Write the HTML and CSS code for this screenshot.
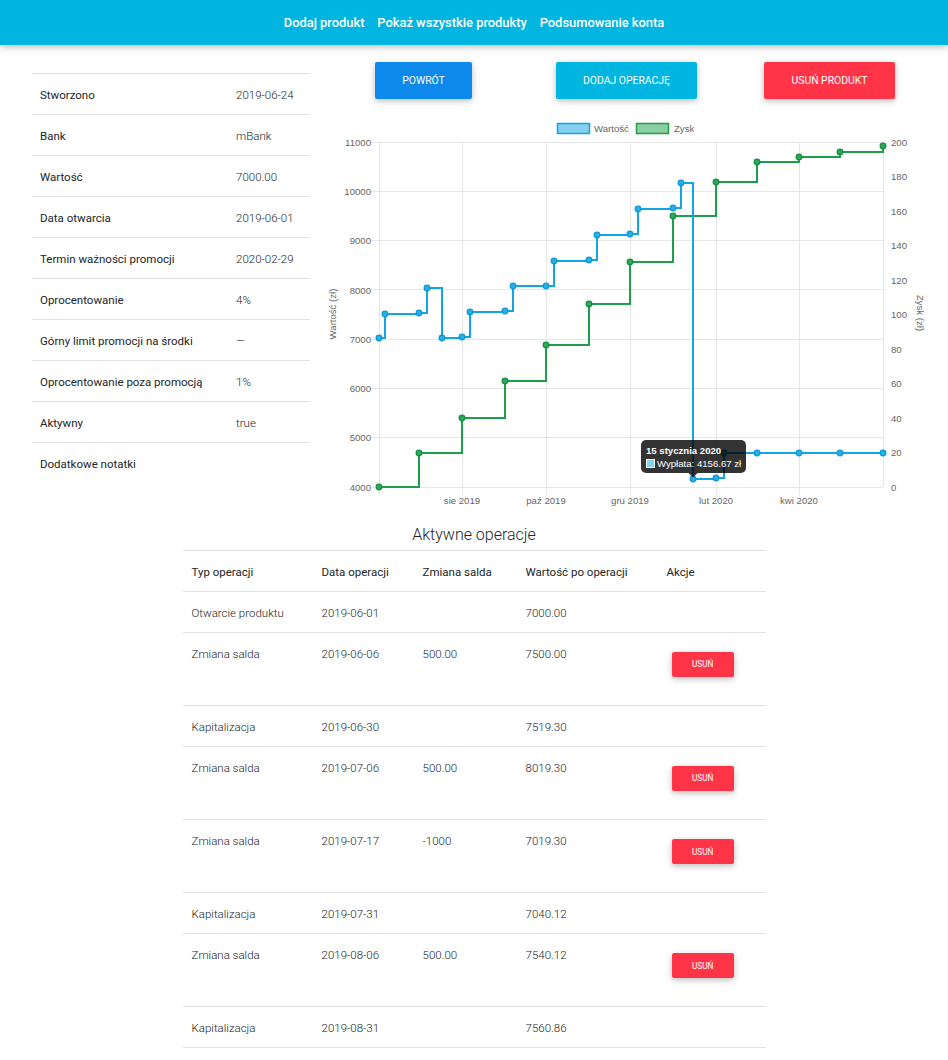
FILE: index.html
```html
<!DOCTYPE html>
<html lang="pl">
<head>
<meta charset="utf-8">
<title>Produkt</title>
<link rel="stylesheet" href="styles.css">
</head>
<body>
<nav class="navbar">
  <a class="nav-link" href="#">Dodaj produkt</a>
  <a class="nav-link" href="#">Pokaż wszystkie produkty</a>
  <a class="nav-link" href="#">Podsumowanie konta</a>
</nav>

<main class="content">
  <section class="details">
    <div class="detail-row"><span class="label">Stworzono</span><span class="value">2019-06-24</span></div>
    <div class="detail-row"><span class="label">Bank</span><span class="value">mBank</span></div>
    <div class="detail-row"><span class="label">Wartość</span><span class="value">7000.00</span></div>
    <div class="detail-row"><span class="label">Data otwarcia</span><span class="value">2019-06-01</span></div>
    <div class="detail-row"><span class="label">Termin ważności promocji</span><span class="value">2020-02-29</span></div>
    <div class="detail-row"><span class="label">Oprocentowanie</span><span class="value">4%</span></div>
    <div class="detail-row"><span class="label">Górny limit promocji na środki</span><span class="value">—</span></div>
    <div class="detail-row"><span class="label">Oprocentowanie poza promocją</span><span class="value">1%</span></div>
    <div class="detail-row"><span class="label">Aktywny</span><span class="value">true</span></div>
    <div class="detail-row"><span class="label">Dodatkowe notatki</span><span class="value"></span></div>
  </section>

  <section class="chart-col">
    <div class="actions">
      <button class="btn btn-primary">Powrót</button>
      <button class="btn btn-info">Dodaj operację</button>
      <button class="btn btn-danger">Usuń produkt</button>
    </div>
    <svg class="chart" viewBox="320 110 611 402" width="611" height="402">
      <g stroke="#e6e6e6" stroke-width="1" fill="none">
        <path d="M371 142.5H883M371 191.5H883M371 240.5H883M371 289.5H883M371 339.5H883M371 388.5H883M371 437.5H883M371 487.5H883"/>
        <path d="M379.5 142V495M462.5 142V495M546.5 142V495M630.5 142V495M716.5 142V495M799.5 142V495M883.5 142V487"/>
      </g>
      <g class="tick" text-anchor="end">
        <text x="371" y="146">11000</text>
        <text x="371" y="195">10000</text>
        <text x="371" y="244">9000</text>
        <text x="371" y="294">8000</text>
        <text x="371" y="343">7000</text>
        <text x="371" y="392">6000</text>
        <text x="371" y="441">5000</text>
        <text x="371" y="491">4000</text>
      </g>
      <g class="tick" text-anchor="start">
        <text x="891" y="146">200</text>
        <text x="891" y="180">180</text>
        <text x="891" y="215">160</text>
        <text x="891" y="249">140</text>
        <text x="891" y="284">120</text>
        <text x="891" y="318">100</text>
        <text x="891" y="353">80</text>
        <text x="891" y="387">60</text>
        <text x="891" y="422">40</text>
        <text x="891" y="456">20</text>
        <text x="891" y="491">0</text>
      </g>
      <g class="tick" text-anchor="middle">
        <text x="462" y="504">sie 2019</text>
        <text x="546" y="504">paź 2019</text>
        <text x="630" y="504">gru 2019</text>
        <text x="716" y="504">lut 2020</text>
        <text x="799" y="504">kwi 2020</text>
      </g>
      <text class="tick" text-anchor="middle" transform="translate(335.5 314) rotate(-90)">Wartość (zł)</text>
      <text class="tick" text-anchor="middle" transform="translate(917 313) rotate(90)">Zysk (zł)</text>

      <g class="legend">
        <rect x="557.5" y="123.5" width="32" height="10" fill="#86d0f0" stroke="#12a4e3" stroke-width="1.5"/>
        <text class="tick" x="594" y="132">Wartość</text>
        <rect x="636.5" y="123.5" width="32" height="10" fill="#8bcea0" stroke="#1c9e4b" stroke-width="1.5"/>
        <text class="tick" x="674" y="132">Zysk</text>
      </g>

      <path class="line-green" d="M379 487H419V453H462V418H505V381H546V345H589V304H630V262H673V216H716V182H757V162H799V157H840V152H883V146"/>
      <g class="pts-green">
        <circle cx="379" cy="487" r="2.8"/><circle cx="419" cy="453" r="2.8"/><circle cx="462" cy="418" r="2.8"/>
        <circle cx="505" cy="381" r="2.8"/><circle cx="546" cy="345" r="2.8"/><circle cx="589" cy="304" r="2.8"/>
        <circle cx="630" cy="262" r="2.8"/><circle cx="673" cy="216" r="2.8"/><circle cx="716" cy="182" r="2.8"/>
        <circle cx="757" cy="162" r="2.8"/><circle cx="799" cy="157" r="2.8"/><circle cx="840" cy="152" r="2.8"/>
        <circle cx="883" cy="146" r="2.8"/>
      </g>

      <path class="line-blue" d="M379 338H385V314H419V313H427V288H442V338H462V337H470V312H505V311H513V286H546V286H554V261H589V260H597V235H630V234H638V209H673V208H681V183H693V479H716V478H724V453H883"/>
      <g class="pts-blue">
        <circle cx="379" cy="338" r="2.8"/><circle cx="385" cy="314" r="2.8"/><circle cx="419" cy="313" r="2.8"/>
        <circle cx="427" cy="288" r="2.8"/><circle cx="442" cy="338" r="2.8"/><circle cx="462" cy="337" r="2.8"/>
        <circle cx="470" cy="312" r="2.8"/><circle cx="505" cy="311" r="2.8"/><circle cx="513" cy="286" r="2.8"/>
        <circle cx="546" cy="286" r="2.8"/><circle cx="554" cy="261" r="2.8"/><circle cx="589" cy="260" r="2.8"/>
        <circle cx="597" cy="235" r="2.8"/><circle cx="630" cy="234" r="2.8"/><circle cx="638" cy="209" r="2.8"/>
        <circle cx="673" cy="208" r="2.8"/><circle cx="681" cy="183" r="2.8"/><circle cx="693" cy="479" r="2.8"/>
        <circle cx="716" cy="478" r="2.8"/><circle cx="724" cy="453" r="2.8"/><circle cx="757" cy="453" r="2.8"/>
        <circle cx="799" cy="453" r="2.8"/><circle cx="840" cy="453" r="2.8"/><circle cx="883" cy="453" r="2.8"/>
      </g>

      <g class="tooltip">
        <rect x="641" y="440" width="105" height="33" rx="5" fill="rgba(0,0,0,0.8)"/>
        <path d="M688.5 473L693 477.5L697.5 473Z" fill="rgba(0,0,0,0.8)"/>
        <text class="tt-title" x="646" y="454">15 stycznia 2020</text>
        <rect x="646" y="459" width="9" height="9" fill="#ffffff"/>
        <rect x="647" y="460" width="7" height="7" fill="#86d0f0"/>
        <text class="tt-body" x="657" y="467">Wypłata: 4156.67 zł</text>
      </g>
    </svg>
  </section>
</main>

<section class="operations">
  <h2 class="ops-title">Aktywne operacje</h2>
  <table class="ops-table">
    <colgroup>
      <col class="c1"><col class="c2"><col class="c3"><col class="c4"><col class="c5">
    </colgroup>
    <thead>
      <tr><th>Typ operacji</th><th>Data operacji</th><th>Zmiana salda</th><th>Wartość po operacji</th><th>Akcje</th></tr>
    </thead>
    <tbody>
      <tr><td>Otwarcie produktu</td><td>2019-06-01</td><td></td><td>7000.00</td><td></td></tr>
      <tr><td>Zmiana salda</td><td>2019-06-06</td><td>500.00</td><td>7500.00</td><td><button class="btn btn-danger btn-sm">Usuń</button></td></tr>
      <tr><td>Kapitalizacja</td><td>2019-06-30</td><td></td><td>7519.30</td><td></td></tr>
      <tr><td>Zmiana salda</td><td>2019-07-06</td><td>500.00</td><td>8019.30</td><td><button class="btn btn-danger btn-sm">Usuń</button></td></tr>
      <tr><td>Zmiana salda</td><td>2019-07-17</td><td>-1000</td><td>7019.30</td><td><button class="btn btn-danger btn-sm">Usuń</button></td></tr>
      <tr><td>Kapitalizacja</td><td>2019-07-31</td><td></td><td>7040.12</td><td></td></tr>
      <tr><td>Zmiana salda</td><td>2019-08-06</td><td>500.00</td><td>7540.12</td><td><button class="btn btn-danger btn-sm">Usuń</button></td></tr>
      <tr><td>Kapitalizacja</td><td>2019-08-31</td><td></td><td>7560.86</td><td></td></tr>
    </tbody>
  </table>
</section>
</body>
</html>
```

FILE: styles.css
```css
* { box-sizing: border-box; }

body {
  margin: 0;
  font-family: Roboto, "Noto Sans", Arial, sans-serif;
  color: #212529;
  background: #ffffff;
}

.navbar {
  height: 45px;
  background: #00b5e0;
  display: flex;
  justify-content: center;
  align-items: center;
  box-shadow: 0 2px 5px 0 rgba(0,0,0,.16), 0 2px 10px 0 rgba(0,0,0,.12);
}

.nav-link {
  color: #ffffff;
  font-size: 12.9px;
  font-weight: 500;
  padding: 0 6.4px;
  text-decoration: none;
}

.content {
  display: flex;
  gap: 10px;
  padding: 0 17px 0 32px;
}

.details {
  width: 278px;
  flex: none;
  margin-top: 28px;
}

.detail-row {
  display: grid;
  grid-template-columns: 196px 1fr;
  border-top: 1px solid #dee2e6;
  font-size: 11.5px;
  line-height: 17px;
}

.detail-row > span {
  padding: 13px 8px 10px;
}

.label { font-weight: 400; }
.value { font-weight: 300; }

.chart-col {
  flex: 1;
  min-width: 0;
}

.actions {
  display: grid;
  grid-template-columns: repeat(3, 1fr);
  justify-items: center;
  margin-top: 17px;
  padding-left: 2px;
}

.btn {
  font-family: Roboto, "Noto Sans", Arial, sans-serif;
  font-size: 10.4px;
  line-height: 15.6px;
  font-weight: 400;
  padding: 10.7px 27.4px;
  color: #ffffff;
  border: 0;
  border-radius: 2px;
  text-transform: uppercase;
  box-shadow: 0 2px 5px 0 rgba(0,0,0,.16), 0 2px 10px 0 rgba(0,0,0,.12);
  cursor: pointer;
}

.btn-primary { background: #0d89ec; }
.btn-info { background: #00b5e0; }
.btn-danger { background: #ff3547; }

.btn-sm {
  display: block;
  font-size: 8.2px;
  line-height: 12.3px;
  padding: 6.4px 20.5px;
  margin: 6px 0 18px 5px;
}

.chart {
  display: block;
  margin-top: 11px;
}

.tick {
  font-family: "Liberation Sans", Arial, sans-serif;
  font-size: 9.6px;
  fill: #666666;
}

.line-blue {
  fill: none;
  stroke: #12a4e3;
  stroke-width: 2;
}

.line-green {
  fill: none;
  stroke: #1c9e4b;
  stroke-width: 2;
}

.pts-blue circle {
  fill: #2aafe8;
  stroke: #0e9ad8;
  stroke-width: 1.3;
}

.pts-green circle {
  fill: #30a85c;
  stroke: #168f42;
  stroke-width: 1.3;
}

.tt-title {
  font-family: "Liberation Sans", Arial, sans-serif;
  font-size: 9.6px;
  font-weight: bold;
  fill: #ffffff;
}

.tt-body {
  font-family: "Liberation Sans", Arial, sans-serif;
  font-size: 9.6px;
  fill: #ffffff;
}

.operations {
  width: 583px;
  margin: 13px auto 0;
}

.ops-title {
  font-size: 16px;
  font-weight: 300;
  line-height: 19px;
  text-align: center;
  margin: 0 0 6px;
}

.ops-table {
  width: 583px;
  border-collapse: collapse;
  table-layout: fixed;
  font-size: 11.5px;
  line-height: 17px;
}

.c1 { width: 130px; }
.c2 { width: 101px; }
.c3 { width: 103px; }
.c4 { width: 141px; }
.c5 { width: 108px; }

.ops-table th,
.ops-table td {
  padding: 13px 9px 10px;
  border-top: 1px solid #dee2e6;
  text-align: left;
  vertical-align: top;
}

.ops-table th { font-weight: 400; }
.ops-table td { font-weight: 300; }

.ops-table tbody tr:last-child td {
  border-bottom: 1px solid #dee2e6;
}
```
